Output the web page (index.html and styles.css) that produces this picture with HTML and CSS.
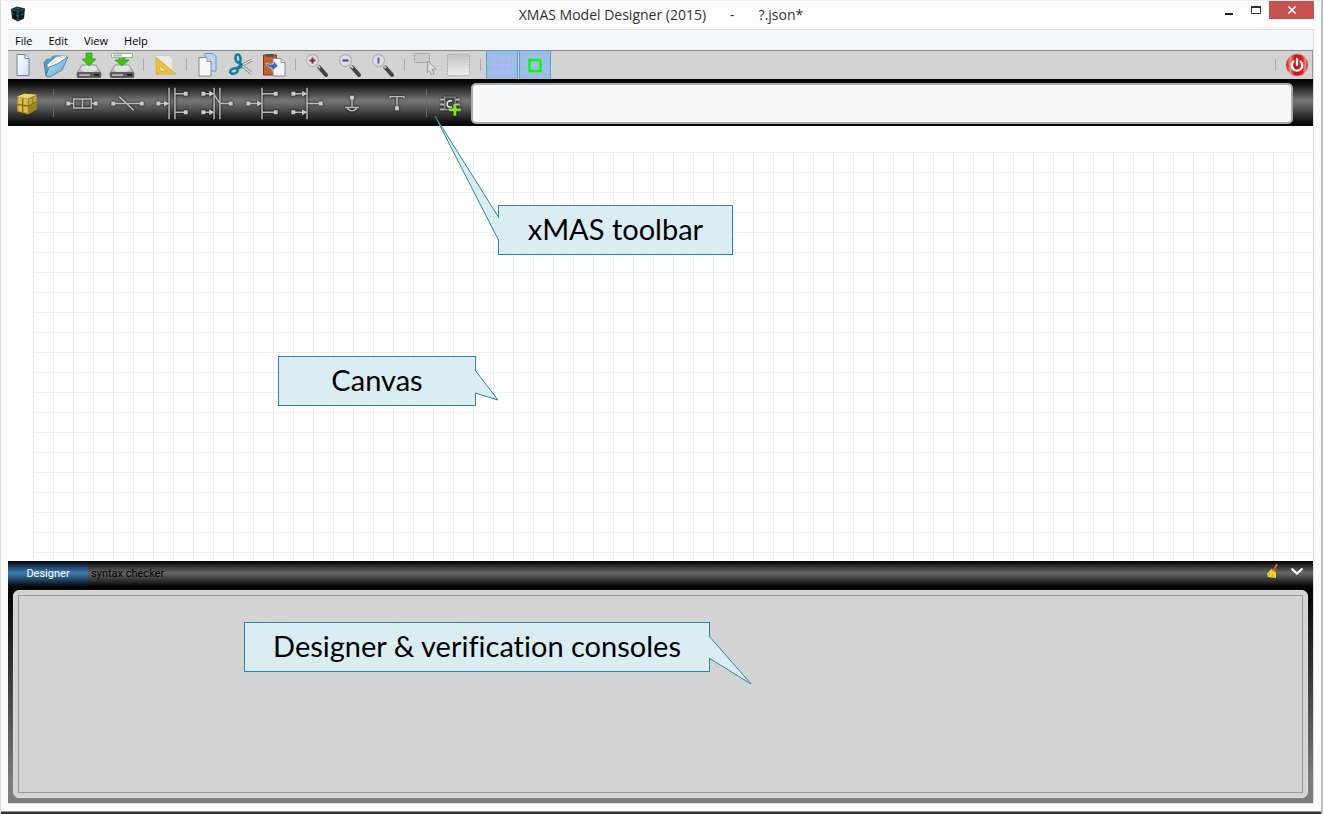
FILE: index.html
```html
<!DOCTYPE html>
<html lang="en">
<head>
<meta charset="utf-8">
<title>XMAS Model Designer (2015)</title>
<link rel="stylesheet" href="styles.css">
</head>
<body>
<svg class="defs" aria-hidden="true">
  <defs>
    <linearGradient id="gPage" x1="0" y1="0" x2="1" y2="1"><stop offset="0" stop-color="#fff"/><stop offset="1" stop-color="#cfe0fb"/></linearGradient>
    <linearGradient id="gBlue" x1="0" y1="0" x2="1" y2="1"><stop offset="0" stop-color="#c5e6f5"/><stop offset="1" stop-color="#5fa3c9"/></linearGradient>
    <linearGradient id="gDrive" x1="0" y1="0" x2="0" y2="1"><stop offset="0" stop-color="#e4e4e0"/><stop offset="1" stop-color="#8b8b87"/></linearGradient>
    <linearGradient id="gBox" x1="0" y1="0" x2="0" y2="1"><stop offset="0" stop-color="#c4c4c4"/><stop offset="1" stop-color="#eee"/></linearGradient>
    <linearGradient id="gRed" x1="0" y1="0" x2="1" y2="0"><stop offset="0" stop-color="#c00d0d"/><stop offset=".2" stop-color="#ee8a8a"/><stop offset=".4" stop-color="#c81010"/><stop offset=".75" stop-color="#d82020"/><stop offset=".88" stop-color="#ee9090"/><stop offset="1" stop-color="#b00808"/></linearGradient>
    <g id="drive">
      <path d="M6 13h14l5 8v3q0 2-2 2H3q-2 0-2-2v-3z" fill="url(#gDrive)" stroke="#777" stroke-width=".7"/>
      <ellipse cx="13" cy="17" rx="8" ry="3.500" fill="#f2f2ef" opacity=".6"/>
      <path d="M2 20h22l1 1v3q0 2-2 2H3q-2 0-2-2v-3z" fill="#5c5c5c"/>
      <path d="M3 23h11" stroke="#aaa" stroke-width="2"/><path d="M18 23h5" stroke="#222" stroke-width="2"/>
    </g>
    <g id="lens">
      <path d="M15 15l7 8" stroke="#444" stroke-width="4" stroke-linecap="round"/>
      <path d="M13 13l3 3" stroke="#ccc" stroke-width="2"/>
      <circle cx="8.500" cy="8.500" r="6" fill="#dedee4" stroke="#b4b4b4" stroke-width="1.300"/>
    </g>
    <path id="mesh" d="M1 6h24M1 13h24M1 20h24M6 1v24M13 1v24M20 1v24" fill="none" stroke="#aeb6ff" stroke-width="2"/>
  </defs>
</svg>
<div class="window">
  <header class="titlebar">
    <svg class="logo" viewBox="0 0 14 16"><path d="M0 3l6-2.500 8 2-1 10-6 3-6-3z" fill="#10252a"/><path d="M1 3.500l6 2 6-2.500M7 5.500V15M1.500 8l5.500 2 5.500-2" stroke="#347478" fill="none" stroke-width=".8"/><path d="M9 7v6M4 5.500v7" stroke="#05090a" stroke-width="1.500"/><path d="M3 2.500l3-1 4 1-3 1.500z" fill="#1f5960"/></svg>
    <h1 class="title"><span>XMAS Model Designer (2015)</span><span>-</span><span>?.json*</span></h1>
    <div class="controls">
      <button class="ctl" aria-label="Minimize"><svg viewBox="0 0 12 12"><path d="M2 10h8" stroke="#222" stroke-width="2"/></svg></button>
      <button class="ctl" aria-label="Maximize"><svg viewBox="0 0 12 12"><path d="M1.500 2.500h9v7h-9z" fill="none" stroke="#333"/><path d="M1 3h10" stroke="#333" stroke-width="2"/></svg></button>
      <button class="ctl close" aria-label="Close"><svg viewBox="0 0 12 12"><path d="M2.500 2.500l7 7m0-7l-7 7" stroke="#fff" stroke-width="1.700"/></svg></button>
    </div>
  </header>
  <main class="app">
    <nav class="menubar"><button>File</button><button>Edit</button><button>View</button><button>Help</button></nav>
    <div class="toolbar">
      <button aria-label="New"><svg viewBox="0 0 26 26"><path d="M7 2.500h8l4 4v17H7z" fill="url(#gPage)" stroke="#6f7fa5"/><path d="M15 2.500v4h4" fill="#fff" stroke="#6f7fa5"/></svg></button>
      <button aria-label="Open"><svg viewBox="0 0 26 26"><path d="M1 10l2-3 5-1 1-2 5-1 7 1-4 13-13 8z" fill="#5a9cc0"/><path d="M4 13l9-8 11-2-3 9-13 9z" fill="#fff" stroke="#999" stroke-width=".6"/><path d="M7 13l9-7 6-1" fill="none" stroke="#bbb" stroke-width=".7"/><path d="M3 24l3-9 8-3 11-7-6 13-12 7z" fill="url(#gBlue)" stroke="#37789c" stroke-width=".8"/><path d="M1 10l2 14" stroke="#37789c"/></svg></button>
      <button aria-label="Save"><svg viewBox="0 0 26 26"><use href="#drive"/><path d="M10 1h6v6h4l-7 7-7-7h4z" fill="#3fc31b" stroke="#2a9a0b" stroke-width=".7"/></svg></button>
      <button aria-label="Save as"><svg viewBox="0 0 26 26"><use href="#drive"/><path d="M10 5h6v3h4l-7 6-7-6h4z" fill="#3fc31b" stroke="#2a9a0b" stroke-width=".7"/><path d="M2.500 1.500h21v4h-21z" fill="#fff" stroke="#8cbd83"/><path d="M4 3.500h9" stroke="#bbb" stroke-width="2"/></svg></button>
      <i class="sep"></i>
      <button aria-label="Measure"><svg viewBox="0 0 26 26"><path d="M3 3.500h14l4 4V23H3z" fill="#eceae4" stroke="#ccc"/><path d="M4 5v17h20zM8 14l6 5H8z" fill="#ecc23b" fill-rule="evenodd" stroke="#d1a21c" stroke-width=".7"/></svg></button>
      <i class="sep"></i>
      <button aria-label="Copy"><svg viewBox="0 0 26 26"><path d="M10 1.500h8l3 3V19H10z" fill="#bcd5f8" stroke="#6d94d2"/><path d="M4 5.500h8l4 4V24H4z" fill="#f8f8f8" stroke="#888"/><path d="M12 5.500v4h4" fill="#ddd" stroke="#999"/></svg></button>
      <button aria-label="Cut"><svg viewBox="0 0 26 26"><path d="M24 8L9 16M23 21L11 11" stroke="#888" stroke-width="3"/><path d="M24 8L9 16M23 21L11 11" stroke="#e8e8e8" stroke-width="1.300"/><path d="M14 14L11 10M8 17l6-3" stroke="#137f9d" stroke-width="3.500"/><ellipse cx="10" cy="6.500" rx="2.500" ry="4" fill="none" stroke="#137f9d" stroke-width="2.600" transform="rotate(-10 10 6.500)"/><ellipse cx="6" cy="19" rx="4" ry="2.500" fill="none" stroke="#137f9d" stroke-width="2.600" transform="rotate(-20 6 19)"/></svg></button>
      <button aria-label="Paste"><svg viewBox="0 0 26 26"><path d="M2.500 3h13v20h-13z" fill="#c2622a" stroke="#7c3912"/><path d="M5 2h8v3H5z" fill="#555"/><path d="M12 6.500h8l4 4V24H12z" fill="#f4f4f4" stroke="#888"/><path d="M20 6.500v4h4" fill="#ddd" stroke="#999"/><path d="M5 11q1 5 6 5v3l6-5-4-5-1 3q-4 1-7-1z" fill="#3f68c4" stroke="#dbe5fa" stroke-width=".7"/></svg></button>
      <i class="sep"></i>
      <button aria-label="Zoom in"><svg viewBox="0 0 26 26"><use href="#lens"/><path d="M5.500 8.500h6M8.500 5.500v6" stroke="#8e2b32" stroke-width="2"/></svg></button>
      <button aria-label="Zoom out"><svg viewBox="0 0 26 26"><use href="#lens"/><path d="M5.500 8.500h6" stroke="#45459a" stroke-width="2"/></svg></button>
      <button aria-label="Zoom to actual size"><svg viewBox="0 0 26 26"><use href="#lens"/><path d="M8.500 5.500v6" stroke="#5d5da8" stroke-width="2"/></svg></button>
      <i class="sep"></i>
      <button aria-label="Select area"><svg viewBox="0 0 26 26"><rect x="1.500" y="1.500" width="15" height="9" rx="1" fill="#ccc" stroke="#999" stroke-dasharray="2 1"/><path d="M15 9l8 8-4 .5 2 4-2.500 1-2-4-2.500 2z" fill="#ddd" stroke="#999"/></svg></button>
      <button aria-label="Select all"><svg viewBox="0 0 26 26"><rect x="1.500" y="2.500" width="22" height="21" rx="1" fill="url(#gBox)" stroke="#aaa" stroke-dasharray="2 1"/></svg></button>
      <i class="sep"></i>
      <button class="on" aria-label="Show grid" aria-pressed="true"><svg viewBox="0 0 26 26"><use href="#mesh"/></svg></button>
      <button class="on" aria-label="Snap to grid" aria-pressed="true"><svg viewBox="0 0 26 26"><use href="#mesh"/><path d="M7.500 8h11v11h-11z" fill="none" stroke="#0f0" stroke-width="2.500"/></svg></button>
      <i class="sep push"></i>
      <button aria-label="Quit"><svg viewBox="0 0 26 26"><circle cx="13" cy="13" r="11" fill="url(#gRed)" stroke="#c99" stroke-width=".7"/><path d="M9.500 9.500a5.200 5.200 0 1 0 7 0M13 7v6" fill="none" stroke="#fff" stroke-width="2.300" stroke-linecap="round"/></svg></button>
    </div>
    <div class="xbar">
      <button class="side" aria-label="Package"><svg viewBox="0 0 38 47"><path d="M9 17l7-3 13 1v15l-9 5-11-3z" fill="#b9972c"/><path d="M9 17l7-3 13 1-9 4z" fill="#ead67a"/><path d="M20 19l9-4v15l-9 5z" fill="#a08022"/><path d="M10 18l4 .5v6l-4-.5zM15.500 19l4 .5v6l-4-.5zM10 26l4 .5v6L10 31.500zM15.500 27l4 .5v6l-4-1z" fill="#dcbe50"/><path d="M21 20l3-1.500v6l-3 1.500zM25.500 18l3-1.500v6l-3 1.500z" fill="#c9a73a"/><path d="M14.500 18.500v15M9 25l11 1.500 9-4.500" stroke="#735a12" fill="none" stroke-width=".8"/></svg></button>
      <i class="sep wide"></i>
      <button class="comp" aria-label="Queue"><svg viewBox="0 0 45 47"><path d="M8 24h5M31 24h5M13.500 19.500h18v9h-18zM22.500 19.500v9"/><path class="dot" d="M6 22h4v4H6zM34 22h4v4h-4z"/></svg></button>
      <button class="comp" aria-label="Function"><svg viewBox="0 0 45 47"><path d="M8 24h29M14 17l15 14"/><path class="dot" d="M6 22h4v4H6zM35 22h4v4h-4z"/></svg></button>
      <button class="comp" aria-label="Switch"><svg viewBox="0 0 45 47"><path d="M8 24h10M19 8v32M25 8v32M25 14h11M25 33h11"/><path class="dot" d="M6 22h4v4H6zM34 12h4v4h-4zM34 31h4v4h-4zM14 21l5 3-5 3z"/></svg></button>
      <button class="comp" aria-label="Merge"><svg viewBox="0 0 45 47"><path d="M8 14h10M8 33h10M19 8v32M25 8v32M19 15l6 9h11"/><path class="dot" d="M6 12h4v4H6zM6 31h4v4H6zM34 22h4v4h-4zM14 11l5 3-5 3zM14 30l5 3-5 3z"/></svg></button>
      <button class="comp" aria-label="Fork"><svg viewBox="0 0 45 47"><path d="M8 24h13M22 8v32M22 14h14M22 33h14"/><path class="dot" d="M6 22h4v4H6zM34 12h4v4h-4zM34 31h4v4h-4zM17 21l5 3-5 3z"/></svg></button>
      <button class="comp" aria-label="Join"><svg viewBox="0 0 45 47"><path d="M8 14h13M8 33h13M22 8v32M22 24h14"/><path class="dot" d="M6 12h4v4H6zM6 31h4v4H6zM34 22h4v4h-4zM17 11l5 3-5 3zM17 30l5 3-5 3z"/></svg></button>
      <button class="comp" aria-label="Source"><svg viewBox="0 0 45 47"><path d="M22 18v10M15 28h14M17 29q5 5 10 0"/><path class="dot" d="M20 16h4v4h-4z"/></svg></button>
      <button class="comp" aria-label="Sink"><svg viewBox="0 0 45 47"><path d="M22 17v12M15 19v-2h14v2"/><path class="dot" d="M20 27h4v4h-4z"/></svg></button>
      <i class="sep mid"></i>
      <button class="comp side" aria-label="Add composite"><svg viewBox="0 0 38 47"><path d="M12.500 17.500h11v13h-11z" fill="#444" stroke="#888"/><path d="M8 20h4M8 25h4M8 30h4M24 20h4M24 25h4" stroke-width="2"/><path d="M20 21.500q-5-1-5 3t5 3" stroke="#eee"/><path class="plus" d="M23 24.500v12M17 30.500h12"/></svg></button>
      <input class="field" type="text" aria-label="Component parameters">
    </div>
    <section class="canvas" aria-label="Canvas">
      <div class="grid"></div>
      <div class="callout c-toolbar">xMAS toolbar<svg viewBox="0 0 66 128"><path d="M65 103L1 1l64 125"/></svg></div>
      <div class="callout c-canvas">Canvas<svg viewBox="0 0 24 34"><path d="M0 1l23 30-23-7"/></svg></div>
    </section>
    <section class="console">
      <div class="tabs"><button class="tab active">Designer</button><button class="tab">syntax checker</button>
        <button class="tool" aria-label="Clear console"><svg viewBox="0 0 14 16"><path d="M9 7l3-6" stroke="#b56a20" stroke-width="2.200"/><path d="M6 6l5 3 0 6-8-1-1-3z" fill="#f0d52c"/><path d="M6 6l5 3" stroke="#d07b28" stroke-width="1.500"/><path d="M5 10l-1 3M8 11l-1 3" stroke="#b99d16" stroke-width=".8"/></svg></button>
        <button class="tool" aria-label="Collapse console"><svg viewBox="0 0 14 16"><path d="M1.500 5.500L7 10.500l5.500-5" fill="none" stroke="#fff" stroke-width="2.200"/></svg></button>
      </div>
      <div class="body"><div class="panel"><textarea aria-label="Console output" readonly></textarea></div></div>
      <div class="callout c-console">Designer &amp; verification consoles<svg viewBox="0 0 44 50"><path d="M0 1l42 48L0 23"/></svg></div>
    </section>
  </main>
</div>
</body>
</html>
```
FILE: styles.css
```css
* { box-sizing: border-box; }
body { margin: 0; font-family: "Open Sans", sans-serif; background: #fcfcfc; }
button { border: 0; padding: 0; background: none; font: inherit; color: inherit; }
svg { display: block; }
.defs { position: absolute; width: 0; height: 0; }

.window {
  height: 100vh;
  display: flex;
  flex-direction: column;
  padding: 0 7px 10px 7px;
  background: #fcfcfc;
  border: solid #bbb;
  border-width: 1px 2px 0 1px;
  border-top-color: #eee;
  border-left-color: #ddd;
  box-shadow: inset 0 -2px #333, inset 0 -3px #999;
}

.titlebar { position: relative; height: 28px; display: flex; justify-content: center; }
.logo { position: absolute; left: 3px; top: 5px; width: 14px; height: 16px; }
.title { display: flex; gap: 24px; margin: 0; font-size: 14px; line-height: 28px; font-weight: 400; color: #333; }
.controls { position: absolute; right: 0; top: 0; display: flex; }
.ctl { width: 27px; height: 18px; display: grid; place-items: center; }
.ctl svg { width: 12px; height: 12px; }
.ctl.close { width: 45px; background: #c75050; }

.app { flex: 1; display: flex; flex-direction: column; min-height: 0; border: 1px solid #ddd; border-width: 1px 1px 1px 0; }
.menubar { display: flex; gap: 16px; height: 20px; padding: 0 7px; background: #f5f6f8; font-size: 11px; line-height: 21px; color: #000; }

.toolbar { display: flex; gap: 3px; height: 29px; background: #d3d3d3; border-top: 1px solid #888; border-right: 1px solid #999; }
.toolbar button { width: 30px; height: 28px; display: grid; place-items: center; }
.toolbar svg { width: 26px; height: 26px; }
.toolbar .on { background: #9bc0dd; outline: 1px solid #5c9ade; }
.sep { align-self: center; width: 7px; height: 12px; background: linear-gradient(#aaa, #aaa) center / 1px 100% no-repeat; }
.push { margin-left: auto; }

.xbar { display: flex; height: 47px; background: linear-gradient(#000, #0c0c0c 10%, #747474 45%, #6c6c6c 52%, #050505 96%, #000); }
.xbar svg { width: 100%; height: 46px; }
.side { width: 38px; }
.comp { width: 45px; }
.comp.side { width: 38px; }
.comp svg { fill: none; stroke: #bbb; stroke-width: 1.5px; filter: drop-shadow(0 0 1px #000); }
.comp .dot { fill: #ccc; stroke: none; }
.comp .plus { stroke: #7ee81c; stroke-width: 3px; }
.xbar .sep { height: 28px; background-image: linear-gradient(#666, #666); }
.xbar .wide { width: 14px; }
.xbar .mid { width: 12px; }
.field { flex: 1; min-width: 0; margin: 4px 20px 2px 1px; padding: 0 8px; font: 14px "Open Sans", sans-serif; background: #f8f8f8; border: 2px solid #aaa; border-radius: 5px; }

.canvas { position: relative; flex: 1; min-height: 0; padding: 26px 0 0 25px; background: #fff; }
.grid {
  height: 100%;
  background: linear-gradient(#eee 1px, transparent 1px) 0 0 / 20px 20px, linear-gradient(90deg, #eee 1px, transparent 1px) 0 0 / 20px 20px;
}

.console { position: relative; }
.tabs { display: flex; height: 26px; font-family: Roboto, sans-serif; font-size: 11px; line-height: 26px; background: linear-gradient(#000, #666 45%, #5c5c5c 52%, #000); }
.tab { padding: 0 3px; color: #000; }
.tab.active { width: 80px; color: #fff; background: linear-gradient(#001, #3f7cb2 45%, #3672a5 52%, #000); }
.tool { width: 25px; display: grid; justify-items: center; align-items: start; padding-top: 2px; }
.tab + .tool { margin-left: auto; }
.tool:last-child { margin-right: 4px; }
.tool svg { width: 14px; height: 16px; }
.body { padding: 3px 5px 5px; background: linear-gradient(#000, #7c7c7c 90%); }
.panel { padding: 4px; background: #d3d3d3; border: 1px solid #ddd; border-radius: 6px; }
.panel textarea { display: block; width: 100%; height: 198px; resize: none; background: #d3d3d3; border: 1px solid #999; outline: 0; }

.callout {
  position: absolute;
  z-index: 1;
  height: 50px;
  font-family: Lato, sans-serif;
  font-size: 29px;
  font-variant-ligatures: none;
  line-height: 46px;
  text-align: center;
  color: #000;
  white-space: nowrap;
  background: #daedf3;
  border: 1px solid #31849b;
}
.callout svg { position: absolute; overflow: visible; fill: #daedf3; stroke: #31849b; stroke-width: 1px; }
.c-toolbar { left: 490px; top: 79px; width: 235px; }
.c-toolbar svg { left: -65px; top: -91px; width: 66px; height: 128px; }
.c-canvas { left: 270px; top: 230px; width: 198px; }
.c-canvas svg { left: 100%; top: 12px; width: 24px; height: 34px; }
.c-console { left: 236px; top: 61px; width: 466px; }
.c-console svg { left: 100%; top: 12px; width: 44px; height: 50px; }
```
